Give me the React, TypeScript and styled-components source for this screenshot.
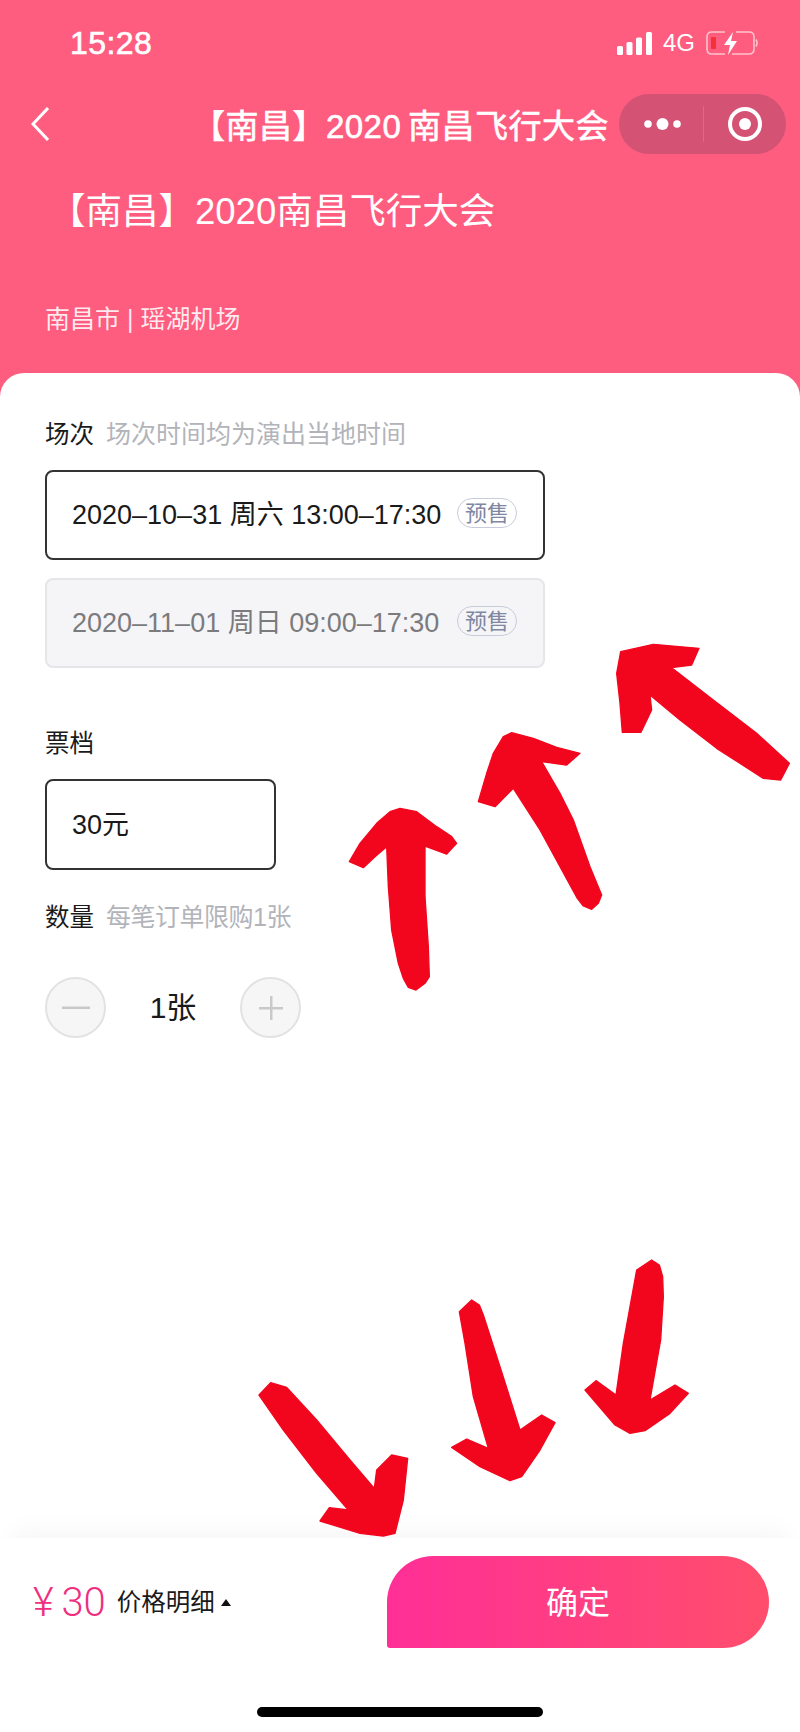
import React from "react";
import styled, { createGlobalStyle } from "styled-components";

const fontStack = `"Liberation Sans", "Noto Sans CJK SC", sans-serif`;

const GlobalStyle = createGlobalStyle`
  html, body {
    margin: 0;
    padding: 0;
    background: #fff;
  }
  * {
    box-sizing: border-box;
  }
`;

const Page = styled.div`
  position: relative;
  display: flex;
  flex-direction: column;
  width: 800px;
  height: 1732px;
  overflow: hidden;
  background: #ff5d7f;
  font-family: ${fontStack};
  color: #1a1a1a;
`;

const Header = styled.header`
  height: 373px;
  flex: none;
  color: #fff;
`;

const StatusBar = styled.div`
  display: flex;
  align-items: center;
  justify-content: space-between;
  height: 94px;
  padding: 0 42px 8px 70px;
`;

const Clock = styled.span`
  font-size: 32px;
  letter-spacing: 0.4px;
  -webkit-text-stroke: 0.6px #fff;
`;

const StatusIcons = styled.div`
  display: flex;
  align-items: center;
  gap: 11px;
`;

const Network = styled.span`
  font-size: 24px;
`;

const NavBar = styled.div`
  display: flex;
  align-items: center;
  height: 60px;
  padding: 0 14px 0 31px;
`;

const NavTitle = styled.div`
  flex: 1;
  text-align: right;
  font-size: 33px;
  letter-spacing: 0.5px;
  word-spacing: -3px;
  -webkit-text-stroke: 0.6px #fff;
  margin-right: 10px;
  white-space: nowrap;
`;

const Capsule = styled.div`
  display: flex;
  align-items: center;
  width: 167px;
  height: 60px;
  border-radius: 30px;
  background: #d45375;
`;

const CapsuleCell = styled.div<{ $inset?: number }>`
  flex: 0 0 50%;
  display: flex;
  align-items: center;
  justify-content: center;
  height: 36px;
  padding-left: ${({ $inset }) => $inset ?? 0}px;
  & + & {
    border-left: 1px solid rgba(255, 255, 255, 0.14);
  }
`;

const EventName = styled.h1`
  margin: 33px 0 0;
  padding-left: 49px;
  font-size: 36.5px;
  line-height: 50px;
  font-weight: 400;
  white-space: nowrap;
`;

const Venue = styled.div`
  margin-top: 64px;
  padding-left: 45px;
  font-size: 25px;
  line-height: 36px;
  color: rgba(255, 255, 255, 0.88);
`;

const Sheet = styled.main`
  flex: 1;
  display: flex;
  flex-direction: column;
  background: #fff;
  border-radius: 24px 24px 0 0;
`;

const Form = styled.div`
  flex: 1;
  padding: 43px 45px 0;
`;

const SectionHead = styled.div<{ $gap?: number }>`
  display: flex;
  align-items: center;
  gap: 12px;
  height: 36px;
  padding-bottom: 4px;
  margin-top: ${({ $gap }) => $gap ?? 0}px;
  font-size: 24.5px;
`;

const Hint = styled.span<{ $tight?: boolean }>`
  font-size: 25px;
  letter-spacing: ${({ $tight }) => ($tight ? -0.5 : 0)}px;
  color: #b2b4ba;
`;

const Option = styled.div<{ $disabled?: boolean; $narrow?: boolean }>`
  display: flex;
  align-items: center;
  justify-content: space-between;
  width: ${({ $narrow }) => ($narrow ? 231 : 500)}px;
  height: ${({ $narrow }) => ($narrow ? 91 : 90)}px;
  padding: 0 26px 5px 25px;
  border: 2px solid ${({ $disabled }) => ($disabled ? "#e6e6e8" : "#333")};
  border-radius: 8px;
  background: ${({ $disabled }) => ($disabled ? "#f5f5f7" : "#fff")};
  color: ${({ $disabled }) => ($disabled ? "#7b7b7e" : "#1a1a1a")};
  font-size: 27px;
  white-space: nowrap;
  margin-top: ${({ $narrow }) => ($narrow ? 18 : 0)}px;
`;

const SessionList = styled.div`
  display: flex;
  flex-direction: column;
  gap: 18px;
  margin-top: 18px;
`;

const Badge = styled.span`
  display: flex;
  align-items: center;
  justify-content: center;
  width: 60px;
  height: 30px;
  padding-bottom: 3px;
  border: 1.5px solid #c8ccda;
  border-radius: 15px;
  color: #7f87a2;
  font-size: 22px;
`;

const Stepper = styled.div`
  display: flex;
  align-items: center;
  margin-top: 42px;
`;

const StepButton = styled.div`
  display: flex;
  align-items: center;
  justify-content: center;
  width: 61px;
  height: 61px;
  border: 2px solid #e2e2e4;
  border-radius: 50%;
  background: #f6f6f7;
`;

const Quantity = styled.span`
  width: 134px;
  padding-bottom: 6px;
  text-align: center;
  font-size: 30px;
`;

const Footer = styled.div`
  flex: none;
  height: 194px;
  background: linear-gradient(#f7f7f7, #fff 24px);
  box-shadow: 0 -18px 24px -12px rgba(0, 0, 0, 0.04);
`;

const PayBar = styled.div`
  display: flex;
  align-items: center;
  justify-content: space-between;
  height: 128px;
  padding: 0 31px 0 33px;
  background: #fff;
`;

const PriceGroup = styled.div`
  display: flex;
  align-items: center;
`;

const Price = styled.span`
  font-family: Roboto, sans-serif;
  font-size: 40px;
  font-weight: 300;
  color: #ee2f80;
  word-spacing: -2px;
  margin-right: 11px;
`;

const PriceDetail = styled.span`
  font-size: 24.5px;
  padding-bottom: 4px;
`;

const Caret = styled.span`
  width: 0;
  height: 0;
  margin: 0 0 0 6px;
  border-left: 5.5px solid transparent;
  border-right: 5.5px solid transparent;
  border-bottom: 7px solid #111;
`;

const ConfirmButton = styled.div`
  display: flex;
  align-items: center;
  justify-content: center;
  width: 382px;
  height: 92px;
  padding-bottom: 4px;
  border-radius: 46px 46px 46px 3px;
  background: linear-gradient(90deg, #ff2f97, #ff4e6c);
  color: #fff;
  font-size: 32px;
`;

const HomeIndicator = styled.div`
  width: 286px;
  height: 10px;
  margin: 41px auto 0;
  border-radius: 5px;
  background: #000;
`;

const ArrowLayer = styled.svg`
  position: absolute;
  left: ${({ x }) => x}px;
  top: ${({ y }) => y}px;
  pointer-events: none;
`;

const ArrowShape = styled.path`
  fill: #f2061e;
  stroke: #f2061e;
  stroke-width: 4;
  stroke-linejoin: round;
`;

// traced at 3x from the hand-drawn arrows
const upArrows = [
  "M180 535 L230 545 L290 590 L335 620 L350 640 L320 672 L255 648 L255 800 L265 950 L268 1040 L255 1060 L228 1080 L205 1072 L190 1045 L175 1000 L155 900 L145 770 L140 650 L105 680 L70 713 L28 695 L60 640 L110 580 L150 545 Z",
  "M515 308 L580 325 L650 352 L720 370 L680 405 L605 395 L660 490 L700 570 L750 710 L785 795 L775 820 L755 838 L730 828 L712 805 L600 600 L520 475 L465 530 L415 515 L440 430 L460 370 L490 320 Z",
  "M940 43 L1077 55 L1055 105 L995 113 L1120 210 L1250 310 L1348 400 L1322 450 L1270 445 L1130 355 L1020 270 L930 195 L935 240 L903 307 L847 307 L840 220 L830 130 L842 65 Z",
];

const downArrows = [
  "M92 428 L140 442 L230 540 L330 660 L403 745 L410 690 L455 645 L503 655 L490 780 L465 880 L430 888 L360 880 L240 843 L268 803 L325 810 L230 700 L130 570 L57 465 Z",
  "M695 180 L718 195 L730 225 L780 380 L840 570 L905 525 L945 548 L900 630 L845 710 L810 722 L720 680 L635 622 L680 597 L745 625 L700 470 L675 310 L658 215 Z",
  "M1235 60 L1258 75 L1268 110 L1270 170 L1262 300 L1230 480 L1305 435 L1345 460 L1290 520 L1215 572 L1170 580 L1125 555 L1035 450 L1068 422 L1128 465 L1150 310 L1190 90 Z",
];

const SignalIcon = () => (
  <svg width="35" height="23" viewBox="0 0 35 23">
    <rect x="0" y="14" width="6" height="9" rx="1.5" fill="#fff" />
    <rect x="9.5" y="10" width="6" height="13" rx="1.5" fill="#fff" />
    <rect x="19" y="5.5" width="6" height="17.5" rx="1.5" fill="#fff" />
    <rect x="29" y="0" width="6" height="23" rx="1.5" fill="#fff" />
  </svg>
);

const BatteryIcon = () => (
  <svg width="52" height="24" viewBox="0 0 52 24">
    <path
      d="M19 1 H6 Q1 1 1 6 V18 Q1 23 6 23 H19 M30 1 H43 Q48 1 48 6 V18 Q48 23 43 23 H26"
      fill="none"
      stroke="#ffc2cd"
      strokeWidth="1.6"
    />
    <rect x="5" y="6" width="5" height="12" rx="1" fill="#f5303a" />
    <path d="M27 1 L18 14 H24 L22 24 L31 10 H25 Z" fill="#fff" />
    <path d="M50 8.5 Q52 12 50 15.5" fill="none" stroke="#ffc2cd" strokeWidth="1.6" />
  </svg>
);

const BackIcon = () => (
  <svg width="18" height="34" viewBox="0 0 18 34">
    <path d="M17 1 L2 17 L17 33" fill="none" stroke="#fff" strokeWidth="3" />
  </svg>
);

const MoreIcon = () => (
  <svg width="44" height="14" viewBox="0 0 44 14">
    <circle cx="4" cy="7" r="3.8" fill="#fff" />
    <circle cx="18.5" cy="7" r="6" fill="#fff" />
    <circle cx="33" cy="7" r="3.8" fill="#fff" />
  </svg>
);

const TargetIcon = () => (
  <svg width="34" height="34" viewBox="0 0 34 34">
    <circle cx="17" cy="17" r="15" fill="none" stroke="#fff" strokeWidth="4" />
    <circle cx="17" cy="17" r="6" fill="#fff" />
  </svg>
);

const MinusIcon = () => (
  <svg width="28" height="4" viewBox="0 0 28 4">
    <rect width="28" height="2.5" y="0.5" fill="#c9c9cb" />
  </svg>
);

const PlusIcon = () => (
  <svg width="24" height="24" viewBox="0 0 24 24">
    <rect y="11" width="24" height="2.5" fill="#c9c9cb" />
    <rect x="11" width="2.5" height="24" fill="#c9c9cb" />
  </svg>
);

const App: React.FC = () => {
  return (
    <Page>
      <GlobalStyle />
      <Header>
        <StatusBar>
          <Clock>15:28</Clock>
          <StatusIcons>
            <SignalIcon />
            <Network>4G</Network>
            <BatteryIcon />
          </StatusIcons>
        </StatusBar>
        <NavBar>
          <BackIcon />
          <NavTitle>【南昌】2020 南昌飞行大会</NavTitle>
          <Capsule>
            <CapsuleCell $inset={10}>
              <MoreIcon />
            </CapsuleCell>
            <CapsuleCell>
              <TargetIcon />
            </CapsuleCell>
          </Capsule>
        </NavBar>
        <EventName>【南昌】2020南昌飞行大会</EventName>
        <Venue>南昌市 | 瑶湖机场</Venue>
      </Header>
      <Sheet>
        <Form>
          <SectionHead>
            场次
            <Hint>场次时间均为演出当地时间</Hint>
          </SectionHead>
          <SessionList>
            <Option>
              2020–10–31 周六 13:00–17:30
              <Badge>预售</Badge>
            </Option>
            <Option $disabled>
              2020–11–01 周日 09:00–17:30
              <Badge>预售</Badge>
            </Option>
          </SessionList>
          <SectionHead $gap={57}>票档</SectionHead>
          <Option $narrow>30元</Option>
          <SectionHead $gap={29}>
            数量
            <Hint $tight>每笔订单限购1张</Hint>
          </SectionHead>
          <Stepper>
            <StepButton>
              <MinusIcon />
            </StepButton>
            <Quantity>1张</Quantity>
            <StepButton>
              <PlusIcon />
            </StepButton>
          </Stepper>
        </Form>
        <Footer>
          <PayBar>
            <PriceGroup>
              <Price>¥ 30</Price>
              <PriceDetail>价格明细</PriceDetail>
              <Caret />
            </PriceGroup>
            <ConfirmButton>确定</ConfirmButton>
          </PayBar>
          <HomeIndicator />
        </Footer>
      </Sheet>
      <ArrowLayer x={340} y={630} width={460} height={380} viewBox="0 0 1380 1140">
        {upArrows.map((d) => (
          <ArrowShape key={d} d={d} />
        ))}
      </ArrowLayer>
      <ArrowLayer x={240} y={1240} width={460} height={310} viewBox="0 0 1380 930">
        {downArrows.map((d) => (
          <ArrowShape key={d} d={d} />
        ))}
      </ArrowLayer>
    </Page>
  );
};

export default App;
